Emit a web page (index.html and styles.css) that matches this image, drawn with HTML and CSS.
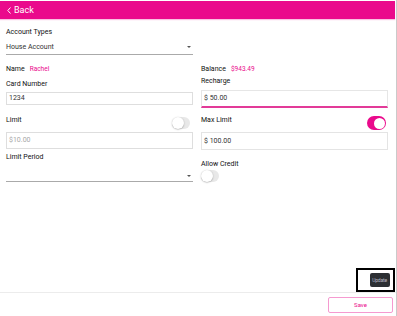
FILE: index.html
```html
<!DOCTYPE html>
<html lang="en">
<head>
	<meta charset="UTF-8">
	<title>Card</title>
	<link rel="stylesheet" href="styles.css">
</head>
<body>
	<div class="page">
		<!-- 顶部 -->
		<div class="top_bar">
			<svg class="back_icon" width="4" height="7" viewBox="0 0 4 7"><polyline points="3.5,0.5 0.8,3.5 3.5,6.5" fill="none" stroke="#fff" stroke-width="1"/></svg>
			<span class="back_txt">Back</span>
		</div>

		<!-- 表单 -->
		<div class="form">
			<div class="acc_type">
				<div class="label label_first">Account Types</div>
				<div class="select">House Account<i class="arrow"></i></div>
			</div>

			<div class="cols">
				<div class="col">
					<div class="info"><span class="label">Name</span><span class="val">Rachel</span></div>
					<div class="label label_card">Card Number</div>
					<div class="input input_card">1234</div>
					<div class="sw_line">
						<span class="label">Limit</span>
						<span class="switch switch_limit"><i class="knob"></i></span>
					</div>
					<div class="input input_dim">$10.00</div>
					<div class="label label_period">Limit Period</div>
					<div class="select select_empty"><i class="arrow"></i></div>
				</div>
				<div class="col">
					<div class="info"><span class="label">Balance</span><span class="val">$943.49</span></div>
					<div class="label label_recharge">Recharge</div>
					<div class="input input_focus">$ 50.00</div>
					<div class="sw_line sw_max">
						<span class="label">Max Limit</span>
						<span class="switch on"><i class="knob"></i></span>
					</div>
					<div class="input input_max">$ 100.00</div>
					<div class="label label_credit">Allow Credit</div>
					<span class="switch switch_credit"><i class="knob"></i></span>
				</div>
			</div>

			<div class="update_box">
				<span class="update_btn">Update</span>
			</div>
		</div>

		<!-- 底部 -->
		<div class="footer">
			<span class="save_btn">Save</span>
		</div>
	</div>
</body>
</html>
```

FILE: styles.css
```css
/* 初始化 */
body{margin:0;padding:0;background:#fff;font-family:Roboto,'Liberation Sans',sans-serif;font-size:7px;color:#222;}

.page{
	width: 396px;
	height: 316px;
	border-right: 1px solid #cacaca;
	display: flex;
	flex-direction: column;
}

.top_bar{
	height: 18px;
	margin-top: 1px;
	margin-right: 1px;
	padding-left: 7px;
	background: #ea0a8c;
	display: flex;
	align-items: center;
	box-shadow: 0 1px 1px rgba(234,10,140,0.25);
}

.top_bar .back_icon{
	margin-right: 3px;
}

.top_bar .back_txt{
	color: #fff;
	font-size: 9px;
	line-height: 9px;
}

.form{
	flex: 1;
	padding: 0 8px 0 6px;
	display: flex;
	flex-direction: column;
}

.label{
	font-weight: 400;
	line-height: 9px;
	color: #111;
}

.label_first{
	margin-top: 9px;
}

.acc_type{
	width: 187px;
}

.select{
	position: relative;
	height: 11px;
	margin-top: 2px;
	padding-top: 4px;
	line-height: 9px;
	color: #333;
	border-bottom: 1px solid #aaa;
}

.select .arrow{
	position: absolute;
	right: 2px;
	top: 7px;
	width: 0;
	height: 0;
	border-left: 2px solid transparent;
	border-right: 2px solid transparent;
	border-top: 2px solid #555;
}

.select_empty{
	height: 13px;
}

.select_empty .arrow{
	top: 11px;
}

.cols{
	display: grid;
	grid-template-columns: 187px 187px;
	column-gap: 8px;
}

.col{
	display: flex;
	flex-direction: column;
	align-items: stretch;
}

.info{
	margin-top: 10px;
	line-height: 9px;
}

.info .val{
	margin-left: 5px;
	color: #ea0a8c;
	font-size: 6.5px;
}

.label_card{
	margin-top: 6px;
}

.input{
	box-sizing: border-box;
	height: 13px;
	margin-top: 3px;
	padding-left: 2px;
	line-height: 11px;
	color: #333;
	border: 1px solid #dedede;
}

.input_dim{
	height: 17px;
	margin-top: 2px;
	line-height: 15px;
	color: #a8a8a8;
}

.label_period{
	margin-top: 4px;
}

.sw_line{
	height: 14px;
	margin-top: 11px;
	display: flex;
	justify-content: space-between;
	align-items: flex-start;
}

.sw_max{
	margin-top: 8px;
}

.switch{
	position: relative;
	display: block;
	box-sizing: border-box;
	width: 18px;
	height: 12px;
	margin-top: 1px;
	margin-right: 3px;
	border-radius: 6px;
	background: #e8e8e8;
}

.switch .knob{
	position: absolute;
	left: 0;
	top: 0;
	width: 12px;
	height: 12px;
	border-radius: 50%;
	background: #fff;
	box-shadow: 0 0.5px 1.5px rgba(0,0,0,0.35);
}

.switch.on{
	width: 19px;
	height: 14px;
	margin-top: 0;
	margin-right: 2px;
	border-radius: 7px;
	background: #ea0a8c;
}

.switch.on .knob{
	left: auto;
	right: 1.5px;
	top: 1.5px;
	width: 11px;
	height: 11px;
	box-shadow: none;
}

.label_recharge{
	margin-top: 3px;
}

.input_focus{
	height: 18px;
	margin-top: 4px;
	line-height: 15px;
	border-color: #e6e6e6;
	border-bottom: 2px solid #e23a98;
}

.input_max{
	height: 18px;
	margin-top: 2px;
	line-height: 16px;
	border-color: #e4e4e4;
}

.label_credit{
	margin-top: 10px;
}

.switch_credit{
	margin-top: 1px;
}

.update_box{
	box-sizing: border-box;
	width: 39px;
	height: 24px;
	margin-top: auto;
	margin-right: -7px;
	align-self: flex-end;
	border: 2px solid #000;
	display: flex;
	align-items: center;
	justify-content: center;
}

.update_btn{
	display: block;
	width: 20px;
	height: 14px;
	margin-left: 8px;
	border-radius: 2px;
	background: #2c2f33;
	color: #b8b8c4;
	font-size: 5px;
	line-height: 14px;
	text-align: center;
	letter-spacing: -0.2px;
}

.footer{
	height: 23px;
	border-top: 1.5px solid #ececec;
	display: flex;
	justify-content: flex-end;
	align-items: flex-start;
}

.save_btn{
	box-sizing: border-box;
	width: 65px;
	height: 16px;
	margin-top: 4px;
	margin-right: 3px;
	border: 1.5px solid #f59ad0;
	border-radius: 2px;
	color: #ea0a8c;
	font-size: 6px;
	line-height: 13px;
	text-align: center;
}
```
